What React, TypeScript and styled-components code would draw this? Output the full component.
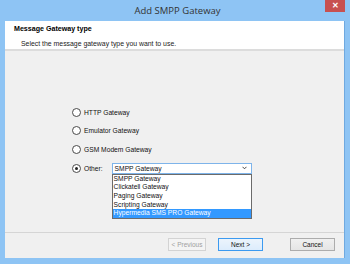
import styled, { createGlobalStyle, css } from 'styled-components'

const GlobalStyle = createGlobalStyle`
  html, body {
    margin: 0;
    padding: 0;
    background: #8ec3f3;
  }
  body {
    font-family: 'Liberation Sans', Arial, sans-serif;
  }
`

const Window = styled.div`
  width: 350px;
  height: 264px;
  box-sizing: border-box;
  background: #8ec4f4;
  padding: 0 5px 6px 5px;
  display: flex;
  flex-direction: column;
`

const TitleBar = styled.div`
  height: 21px;
  display: grid;
  grid-template-columns: 1fr auto 1fr;
  align-items: start;
`

const Title = styled.div`
  grid-column: 2;
  font-family: 'Open Sans', 'Noto Sans', sans-serif;
  font-size: 9.5px;
  line-height: 21px;
  color: #333;
  padding-left: 5px;
`

const CloseButton = styled.div`
  grid-column: 3;
  justify-self: end;
  width: 20px;
  height: 12px;
  background: #c75050;
  color: #fff;
  font-size: 8px;
  font-weight: bold;
  line-height: 12px;
  text-align: center;
`

const Client = styled.div`
  flex: 1;
  display: flex;
  flex-direction: column;
  background: #f0f0f0;
  border-right: 1px solid #6fa9e0;
`

const Header = styled.div`
  height: 30px;
  box-sizing: border-box;
  background: #fff;
  padding: 4px 0 0 9px;
  border-bottom: 2px solid #dcdcdc;
`

const HeaderTitle = styled.div`
  font-size: 7.1px;
  font-weight: bold;
  color: #000;
  line-height: 9px;
`

const HeaderText = styled.div`
  font-size: 6.9px;
  color: #222;
  line-height: 9px;
  margin-top: 5px;
  padding-left: 7px;
`

const Body = styled.div`
  flex: 1;
  display: flex;
  flex-direction: column;
  gap: 10.1px;
  padding: 57px 0 0 67px;
`

const Option = styled.label`
  display: flex;
  align-items: center;
  gap: 3px;
  height: 8.6px;
  font-size: 6.7px;
  color: #111;
`

const Radio = styled.span<{ $checked?: boolean }>`
  width: 7px;
  height: 7px;
  border-radius: 50%;
  border: 1px solid #4a4a4a;
  background: #fff;
  display: flex;
  align-items: center;
  justify-content: center;
  &::after {
    content: '';
    width: 3px;
    height: 3px;
    border-radius: 50%;
    background: ${(p) => (p.$checked ? '#222' : 'transparent')};
  }
`

const ComboWrap = styled.div`
  position: relative;
  margin-left: 6px;
`

const Combo = styled.div`
  width: 140px;
  height: 11px;
  box-sizing: border-box;
  border: 1px solid #7eb4ea;
  background: #fff;
  display: flex;
  align-items: center;
  justify-content: space-between;
  padding: 0 4px 0 2px;
  font-size: 6.7px;
  color: #111;
`

const Chevron = styled.svg`
  width: 5px;
  height: 4px;
`

const DropList = styled.div`
  position: absolute;
  top: 11px;
  left: 0;
  width: 140px;
  box-sizing: border-box;
  border: 1px solid #6b6b6b;
  background: #fff;
  z-index: 2;
`

const DropItem = styled.div<{ $active?: boolean }>`
  height: 8.6px;
  line-height: 8.6px;
  padding-left: 1px;
  font-size: 6.7px;
  color: #111;
  ${(p) =>
    p.$active &&
    css`
      background: #3399ff;
      color: #fff;
    `}
`

const Footer = styled.div`
  height: 26px;
  box-sizing: border-box;
  border-top: 1px solid #d5d5d5;
  display: flex;
  align-items: flex-start;
  padding: 5px 9px 0 0;
  justify-content: flex-end;
`

const Button = styled.button<{ $variant?: 'default' | 'disabled'; $width: number; $gap: number }>`
  width: ${(p) => p.$width}px;
  height: 13px;
  margin-left: ${(p) => p.$gap}px;
  padding: 0;
  box-sizing: border-box;
  font-family: 'Liberation Sans', Arial, sans-serif;
  font-size: 6.5px;
  color: #111;
  border: 1px solid #acacac;
  border-radius: 0;
  background: linear-gradient(#f0f0f0, #e5e5e5);
  ${(p) =>
    p.$variant === 'default' &&
    css`
      border-color: #3c9af0;
      background: linear-gradient(#ecf4fc, #dcecfc);
    `}
  ${(p) =>
    p.$variant === 'disabled' &&
    css`
      border-color: #d3d3d3;
      color: #a0a0a0;
      background: #f4f4f4;
    `}
`

const gateways = [
  'SMPP Gateway',
  'Clickatell Gateway',
  'Paging Gateway',
  'Scripting Gateway',
  'Hypermedia SMS PRO Gateway',
]

export default function App() {
  return (
    <>
      <GlobalStyle />
      <Window>
        <TitleBar>
          <Title>Add SMPP Gateway</Title>
          <CloseButton>✕</CloseButton>
        </TitleBar>
        <Client>
          <Header>
            <HeaderTitle>Message Gateway type</HeaderTitle>
            <HeaderText>Select the message gateway type you want to use.</HeaderText>
          </Header>
          <Body>
            <Option>
              <Radio />
              HTTP Gateway
            </Option>
            <Option>
              <Radio />
              Emulator Gateway
            </Option>
            <Option>
              <Radio />
              GSM Modem Gateway
            </Option>
            <Option>
              <Radio $checked />
              Other:
              <ComboWrap>
                <Combo>
                  SMPP Gateway
                  <Chevron viewBox="0 0 5 4">
                    <path d="M0.5 0.8 L2.5 2.8 L4.5 0.8" fill="none" stroke="#333" strokeWidth="0.9" />
                  </Chevron>
                </Combo>
                <DropList>
                  {gateways.map((g, i) => (
                    <DropItem key={g} $active={i === gateways.length - 1}>
                      {g}
                    </DropItem>
                  ))}
                </DropList>
              </ComboWrap>
            </Option>
          </Body>
          <Footer>
            <Button $variant="disabled" $width={38} $gap={0}>
              &lt; Previous
            </Button>
            <Button $variant="default" $width={45} $gap={12}>
              Next &gt;
            </Button>
            <Button $width={45} $gap={27}>
              Cancel
            </Button>
          </Footer>
        </Client>
      </Window>
    </>
  )
}
